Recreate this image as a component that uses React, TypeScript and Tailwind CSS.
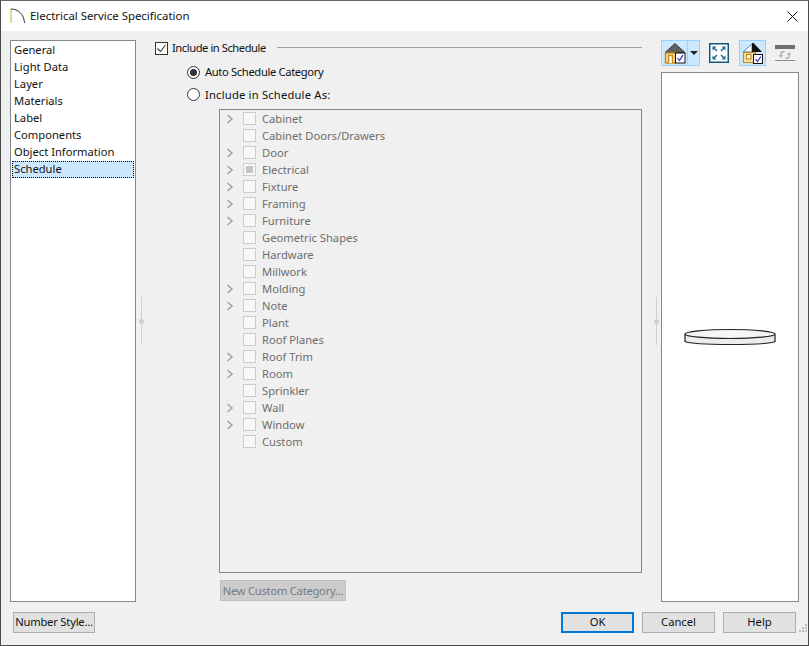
const font = "font-['Noto_Sans','Open_Sans',sans-serif]";

const sections = ["General", "Light Data", "Layer", "Materials", "Label", "Components", "Object Information", "Schedule"];

const categories = [
  { name: "Cabinet", more: true },
  { name: "Cabinet Doors/Drawers" },
  { name: "Door", more: true },
  { name: "Electrical", more: true, partial: true },
  { name: "Fixture", more: true },
  { name: "Framing", more: true },
  { name: "Furniture", more: true },
  { name: "Geometric Shapes" },
  { name: "Hardware" },
  { name: "Millwork" },
  { name: "Molding", more: true },
  { name: "Note", more: true },
  { name: "Plant" },
  { name: "Roof Planes" },
  { name: "Roof Trim", more: true },
  { name: "Room", more: true },
  { name: "Sprinkler" },
  { name: "Wall", more: true },
  { name: "Window", more: true },
  { name: "Custom" },
];

function Splitter() {
  return (
    <div className="relative h-[48px] w-px bg-[#cfcfcf]">
      <div className="absolute left-[-2px] top-[22px] h-[5px] w-[5px] rounded-full bg-[#cfcfcf]" />
    </div>
  );
}

function DialogButton({ label, primary, className = "" }: { label: string; primary?: boolean; className?: string }) {
  return (
    <button
      className={`flex h-[21px] items-center justify-center whitespace-nowrap bg-[#e1e1e1] pb-px text-[#111] ${
        primary ? "border-2 border-[#0078d7]" : "border border-[#adadad]"
      } ${className}`}
    >
      {label}
    </button>
  );
}

function HouseIcon() {
  return (
    <svg width="22" height="22" viewBox="0 0 22 22">
      <path d="M1 10.5 L11 1.5 L21 10.5 Z" fill="#5f5f5f" stroke="#444" strokeWidth="1" />
      <rect x="1.5" y="11" width="10" height="10" fill="#f6e3b4" stroke="#c98a1a" strokeWidth="1.5" />
      <path d="M4.5 21 V13.5 H8.5 V21" fill="#fff" stroke="#c98a1a" strokeWidth="1.5" />
      <rect x="11.5" y="11" width="9.5" height="10" fill="#fff" stroke="#111" strokeWidth="1" />
      <path d="M13.5 16 L15.5 18.5 L19 13" fill="none" stroke="#2a2ab8" strokeWidth="1.2" />
    </svg>
  );
}

function FitIcon() {
  return (
    <svg width="20" height="20" viewBox="0 0 20 20">
      <rect x="0.75" y="0.75" width="18.5" height="18.5" fill="#fff" stroke="#14587a" strokeWidth="1.5" />
      <path d="M3.5 3.5 L7.5 3.5 L3.5 7.5 Z M16.5 3.5 L12.5 3.5 L16.5 7.5 Z M3.5 16.5 L7.5 16.5 L3.5 12.5 Z M16.5 16.5 L12.5 16.5 L16.5 12.5 Z" fill="#1d6f98" />
      <path d="M5 5 L8 8 M15 5 L12 8 M5 15 L8 12 M15 15 L12 12" stroke="#1d6f98" strokeWidth="1.5" />
    </svg>
  );
}

function HouseCutIcon() {
  return (
    <svg width="22" height="22" viewBox="0 0 22 22">
      <path d="M1 10 L10 2 V10 Z" fill="#fff" stroke="#2b8fc4" strokeWidth="1" />
      <path d="M10 1 H11.5 L20 10 H10 Z" fill="#111" />
      <rect x="1.5" y="10.5" width="12" height="10" fill="#f6e3b4" stroke="#c98a1a" strokeWidth="1.2" />
      <rect x="4.5" y="12.5" width="4.5" height="4.5" fill="#fff" stroke="#c98a1a" strokeWidth="1.2" />
      <rect x="11.5" y="12.5" width="9" height="9" fill="#fff" stroke="#111" strokeWidth="1" />
      <path d="M13.5 17 L15.5 19.5 L18.8 14.5" fill="none" stroke="#2a2ab8" strokeWidth="1.2" />
    </svg>
  );
}

function RefreshIcon() {
  return (
    <svg width="20" height="16" viewBox="0 0 20 16">
      <rect x="0" y="0" width="20" height="4" fill="#6e6e6e" />
      <rect x="0" y="15" width="20" height="1" fill="#8a8a8a" />
      <path d="M6 11 C5 8 7 6.5 9.5 6.5 M14 9 C15 12 13 13.5 10.5 13.5" fill="none" stroke="#b0b0b0" strokeWidth="1.5" />
      <path d="M4 10 L8 10 L6 13 Z M12 10 L16 10 L14 7 Z" fill="#b0b0b0" />
    </svg>
  );
}

function FixturePreview() {
  return (
    <svg width="92" height="18" viewBox="0 0 92 18">
      <path d="M1 6 V13.5 C10 17.5 82 17.5 91 13.5 V6" fill="#ececec" stroke="#222" strokeWidth="1.2" />
      <ellipse cx="46" cy="6" rx="45" ry="4.5" fill="#f5f5f5" stroke="#222" strokeWidth="1.2" />
    </svg>
  );
}

export default function App() {
  return (
    <div className={`flex h-[646px] w-[809px] flex-col border border-[#4a4a4a] border-t-[#666] bg-[#f0f0f0] text-[11.2px] text-[#111] ${font}`}>
      <div className="flex h-[30px] items-center bg-white pl-[9px] pr-[9px]">
        <svg width="16" height="16" viewBox="0 0 16 16" className="mr-[4px]">
          <path d="M1 1 V15" stroke="#9ac22e" strokeWidth="1" fill="none" />
          <path d="M1 1 C8 1 14 6 14.5 15" stroke="#333" strokeWidth="1" fill="none" />
        </svg>
        <span className="text-[11.4px]">Electrical Service Specification</span>
        <svg width="11" height="11" viewBox="0 0 11 11" className="ml-auto mr-[1px]">
          <path d="M0.5 0.5 L10.5 10.5 M10.5 0.5 L0.5 10.5" stroke="#111" strokeWidth="1" />
        </svg>
      </div>

      <div className="flex h-[571px] pl-[9px] pt-[9px]">
        <div className="h-[562px] w-[126px] border border-[#828790] bg-white p-px">
          {sections.map((s) =>
            s === "Schedule" ? (
              <div key={s} className="flex h-[17px] items-center border border-dotted border-black bg-[#cce8ff] pb-px pl-[1px]">
                {s}
              </div>
            ) : (
              <div key={s} className="flex h-[17px] items-center pb-px pl-[2px]">
                {s}
              </div>
            ),
          )}
        </div>

        <div className="flex w-[19px] items-center justify-center pr-[9px]">
          <Splitter />
        </div>

        <div className="flex w-[487px] flex-col">
          <div className="mt-px flex h-[15px] items-center">
            <span className="flex h-[13px] w-[13px] items-center justify-center border border-[#333] bg-white">
              <svg width="11" height="11" viewBox="0 0 11 11">
                <path d="M1.5 5.5 L4.5 8.5 L9.5 2" fill="none" stroke="#333" strokeWidth="1.1" />
              </svg>
            </span>
            <span className="mb-px ml-[4px] tracking-[-0.45px]">Include in Schedule</span>
            <div className="mb-[2px] ml-[11px] h-px flex-1 bg-[#a0a0a0]" />
          </div>

          <div className="ml-[32px] mt-[9px] flex h-[15px] items-center">
            <span className="flex h-[13px] w-[13px] items-center justify-center rounded-full border border-[#333] bg-white">
              <span className="h-[7px] w-[7px] rounded-full bg-[#333]" />
            </span>
            <span className="mb-px ml-[5px] tracking-[-0.35px]">Auto Schedule Category</span>
          </div>
          <div className="ml-[32px] mt-[7px] flex h-[15px] items-center">
            <span className="h-[13px] w-[13px] rounded-full border border-[#333] bg-white" />
            <span className="ml-[5px] pt-px tracking-[0.2px]">Include in Schedule As:</span>
          </div>

          <div className="ml-[64px] mt-[7px] h-[464px] border border-[#828790] pl-[6px] text-[#6d6d6d]">
            {categories.map((c) => (
              <div key={c.name} className="flex h-[17px] items-center">
                <span className="flex w-[17px] justify-start">
                  {c.more && (
                    <svg width="8" height="10" viewBox="0 0 8 10">
                      <path d="M1.5 1 L6 5 L1.5 9" fill="none" stroke="#a6a6a6" strokeWidth="1.6" />
                    </svg>
                  )}
                </span>
                <span className="flex h-[13px] w-[13px] items-center justify-center border border-[#cccccc] bg-[#f7f7f7]">
                  {c.partial && <span className="h-[7px] w-[7px] bg-[#c4c4c4]" />}
                </span>
                <span className="ml-[6px] pt-[2px]">{c.name}</span>
              </div>
            ))}
          </div>

          <div className="ml-[65px] mt-[7px] flex h-[21px] w-[126px] items-center justify-center whitespace-nowrap border border-[#bfbfbf] bg-[#cccccc] pt-px text-[#7a7a7a] tracking-[-0.25px]">
            New Custom Category...
          </div>
        </div>

        <div className="flex w-[19px] items-center justify-center pl-[9px]">
          <Splitter />
        </div>

        <div className="flex w-[138px] flex-col">
          <div className="flex h-[26px] items-center">
            <div className="flex h-[26px] w-[39px] border border-[#99d1ff] bg-[#cce8ff]">
              <div className="flex w-[26px] items-center justify-center border-r border-[#99d1ff]">
                <HouseIcon />
              </div>
              <div className="flex flex-1 items-center justify-center">
                <span className="h-0 w-0 border-x-[4px] border-t-[4px] border-x-transparent border-t-[#222]" />
              </div>
            </div>
            <div className="ml-[9px] flex w-[20px] justify-center">
              <FitIcon />
            </div>
            <div className="ml-[10px] flex h-[26px] w-[27px] items-center justify-center border border-[#99d1ff] bg-[#cce8ff]">
              <HouseCutIcon />
            </div>
            <div className="ml-[9px] flex w-[20px] justify-center">
              <RefreshIcon />
            </div>
          </div>
          <div className="mt-[6px] flex h-[530px] items-start justify-center border border-[#828790] bg-white pt-[255px]">
            <FixturePreview />
          </div>
        </div>
      </div>

      <div className="relative flex items-start pl-[12px] pt-[10px]">
        <DialogButton label="Number Style..." className="w-[82px] tracking-[-0.2px]" />
        <div className="ml-[466px] flex gap-[8px]">
          <DialogButton label="OK" primary className="w-[73px]" />
          <DialogButton label="Cancel" className="w-[73px]" />
          <DialogButton label="Help" className="w-[73px]" />
        </div>
        <svg width="9" height="9" viewBox="0 0 9 9" className="absolute bottom-[1px] right-[1px]">
          <path d="M7 1h2v2h-2z M4 4h2v2h-2z M7 4h2v2h-2z M1 7h2v2h-2z M4 7h2v2h-2z M7 7h2v2h-2z" fill="#bdbdbd" />
        </svg>
      </div>
    </div>
  );
}
